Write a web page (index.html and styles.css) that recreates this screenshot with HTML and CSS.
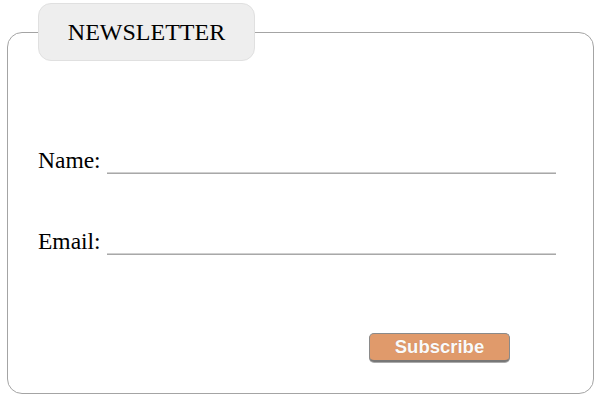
FILE: index.html
```html
<!DOCTYPE html>
<html>
<head>
<meta charset="utf-8">
<link rel="stylesheet" href="styles.css">
</head>
<body>
<form class="newsletter">
  <fieldset class="box">
    <legend class="title">NEWSLETTER</legend>
    <div class="field first">
      <label class="label" for="name">Name:</label>
      <input class="input" id="name" type="text">
    </div>
    <div class="field">
      <label class="label" for="email">Email:</label>
      <input class="input" id="email" type="text">
    </div>
    <div class="actions">
      <button class="btn" type="button">Subscribe</button>
    </div>
  </fieldset>
</form>
</body>
</html>
```
FILE: styles.css
```css
html, body {
  margin: 0;
  padding: 0;
  background: #fff;
}
.newsletter {
  padding: 3px 12px 0 7px;
  width: 606px;
  box-sizing: border-box;
}
.box {
  margin: 0;
  border: 1px solid #a4a4a4;
  border-radius: 15px;
  padding: 0 30px 31px 30px;
  min-width: 0;
}
.title {
  box-sizing: border-box;
  display: flex;
  justify-content: center;
  align-items: center;
  width: 217px;
  height: 58px;
  padding: 0;
  margin: 0;
  background: #eeeeee;
  border: 1px solid #e0e0e0;
  border-radius: 13px;
  font-family: "Liberation Serif", "Times New Roman", serif;
  font-size: 24px;
  line-height: 28px;
  text-align: left;
  color: #000;
}
.field {
  display: grid;
  grid-template-columns: 69px 449px;
  align-items: end;
  margin-top: 55px;
}
.field.first {
  margin-top: 86px;
}
.label {
  font-family: "Liberation Serif", "Times New Roman", serif;
  font-size: 23.5px;
  line-height: 26px;
  color: #000;
}
.input {
  box-sizing: border-box;
  height: 20px;
  width: 449px;
  margin: 0 0 -1px 0;
  padding: 0;
  border: none;
  border-bottom: 1px solid #a8a8a8;
  box-shadow: 0 -1px 0 #d0d0d0 inset;
  background: transparent;
  outline: none;
}
.actions {
  display: flex;
  margin-top: 79px;
  padding-left: 331px;
}
.btn {
  box-sizing: border-box;
  width: 141px;
  height: 29px;
  padding: 0;
  background: #e09a6b;
  border: 1px solid #8a8a8a;
  border-bottom: 2px solid #777;
  border-radius: 5px;
  box-shadow: 0 1px 0 #aaa;
  font-family: "Liberation Sans", Arial, sans-serif;
  font-weight: bold;
  font-size: 18.5px;
  color: #fafafa;
  text-shadow: 0 0 1px rgba(0,0,0,0.15);
  cursor: pointer;
}
```
